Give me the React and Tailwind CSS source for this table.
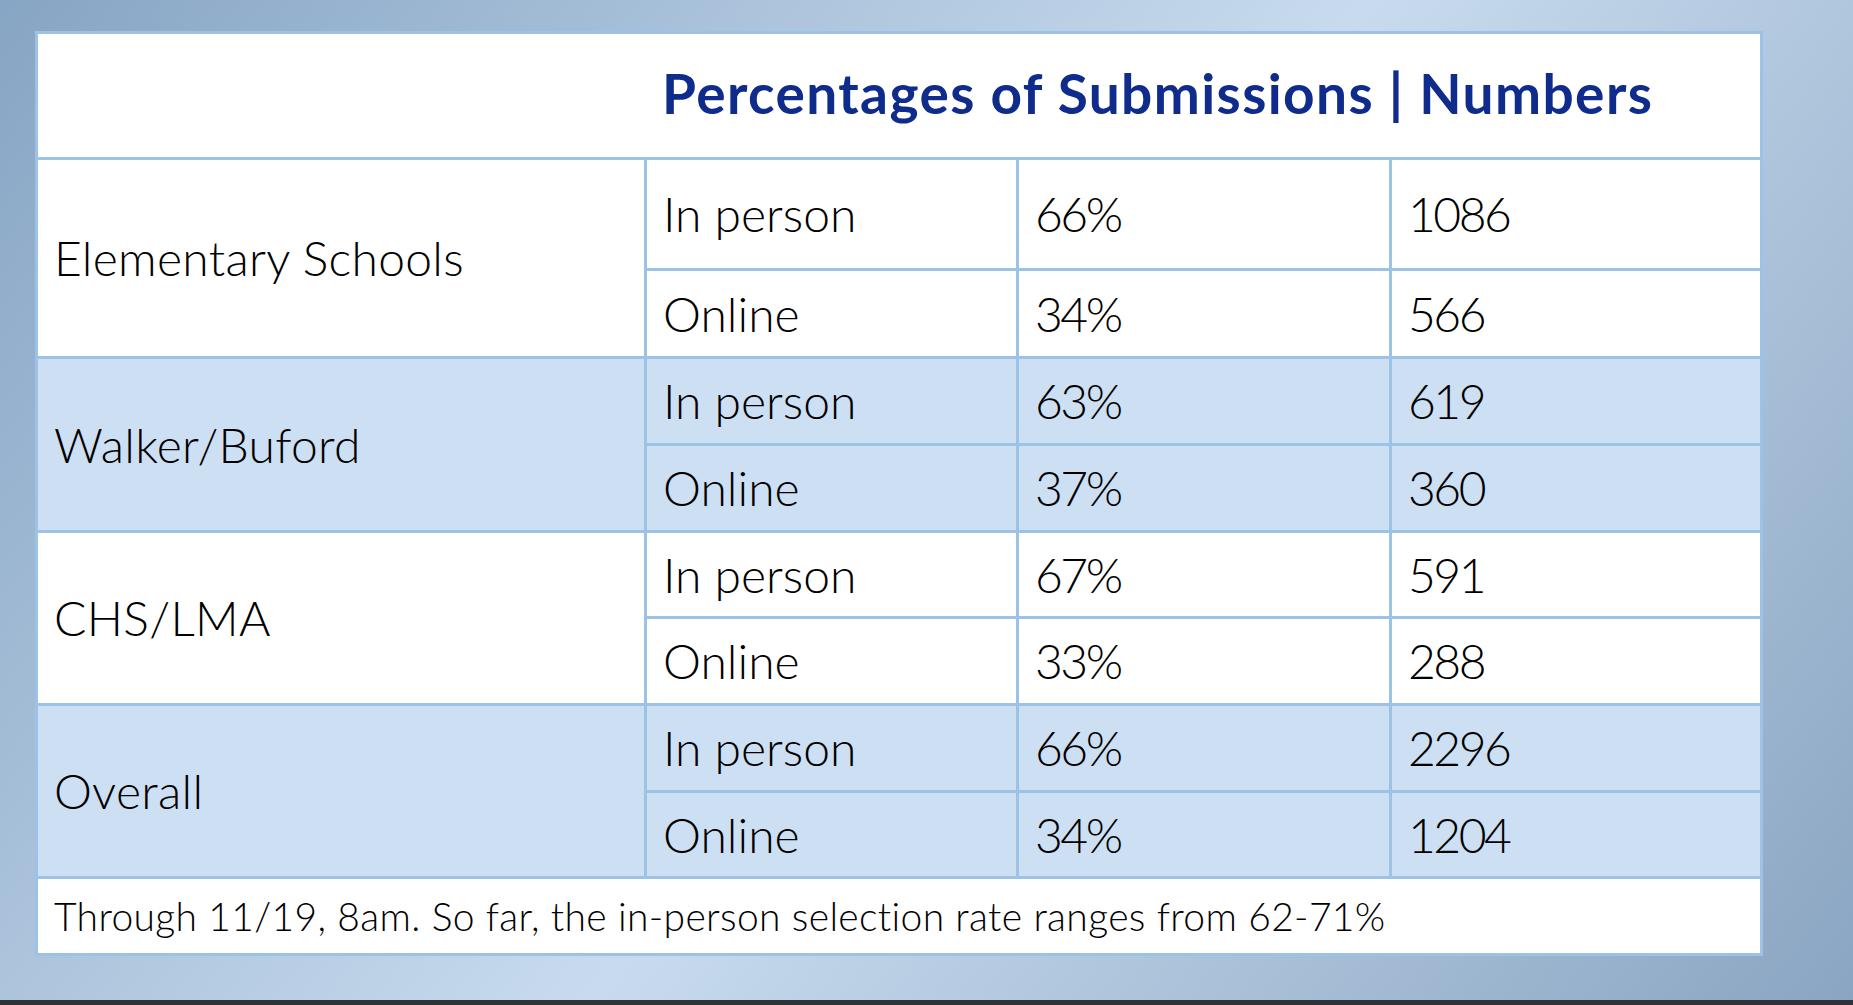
import React from 'react';

const groups = [
  {
    name: 'Elementary Schools',
    rows: [
      ['In person', '66%', '1086'],
      ['Online', '34%', '566'],
    ],
  },
  {
    name: 'Walker/Buford',
    rows: [
      ['In person', '63%', '619'],
      ['Online', '37%', '360'],
    ],
  },
  {
    name: 'CHS/LMA',
    rows: [
      ['In person', '67%', '591'],
      ['Online', '33%', '288'],
    ],
  },
  {
    name: 'Overall',
    rows: [
      ['In person', '66%', '2296'],
      ['Online', '34%', '1204'],
    ],
  },
];

export default function App() {
  return (
    <div
      className="flex flex-col h-[1005px] w-full bg-[linear-gradient(128deg,#87a5c4_0%,#c8dbee_52%,#8aa5c2_100%)]"
      style={{ fontFamily: 'Lato, "Open Sans", sans-serif' }}
    >
      <div className="flex-1 pt-[31px] pl-[35px]">
        <div className="grid w-fit grid-cols-[606px_369px_370px_368px] grid-rows-[123px_108px_85px_84px_84px_83px_84px_84px_83px_74px] gap-[3px] p-[3px] bg-[#9cc2e5] text-black font-light">
          {/* heading */}
          <div className="col-span-4 bg-white grid grid-cols-[609px_1fr]">
            <div />
            <div className="flex items-center pl-[15px] pb-[4px]">
              <h1 className="text-[55px] font-bold tracking-[1.4px] text-[#0f2b8c] leading-none">
                Percentages of Submissions | Numbers
              </h1>
            </div>
          </div>

          {groups.map((group, gi) => {
            const bg = gi % 2 === 0 ? 'bg-white' : 'bg-[#cddff2]';
            return (
              <React.Fragment key={group.name}>
                <div className={`row-span-2 flex items-center pl-[16px] text-[48px] tracking-[0.3px] ${bg}`}>
                  {group.name}
                </div>
                {group.rows.map((row, ri) => (
                  <React.Fragment key={ri}>
                    {row.map((cell, ci) => (
                      <div
                        key={ci}
                        className={`flex items-center pl-[16px] text-[48px] ${bg} ${ci > 0 ? 'tracking-[-2.5px]' : ''} ${ri === 0 && ci === 0 ? 'col-start-2' : ''}`}
                      >
                        {cell}
                      </div>
                    ))}
                  </React.Fragment>
                ))}
              </React.Fragment>
            );
          })}

          {/* footer note */}
          <div className="col-span-4 bg-white flex items-center pl-[16px] text-[39px] tracking-[0.35px]">
            Through 11/19, 8am. So far, the in-person selection rate ranges from 62-71%
          </div>
        </div>
      </div>
      <div className="h-[5px] bg-[#2e3338]" />
    </div>
  );
}
